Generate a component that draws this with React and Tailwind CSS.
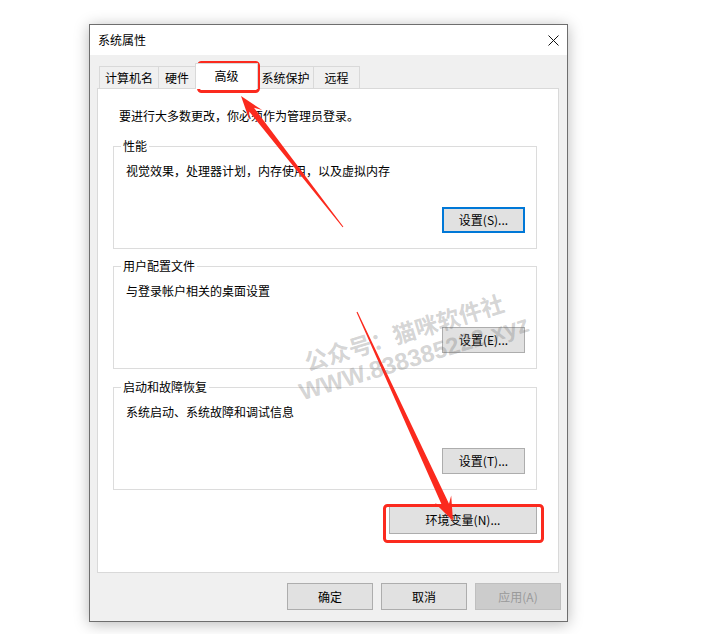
import React from 'react';

const arrowPoints = (x1, y1, x2, y2, tail, shaft, head, headLen) => {
  const dx = x2 - x1;
  const dy = y2 - y1;
  const len = Math.hypot(dx, dy);
  const ux = dx / len;
  const uy = dy / len;
  const nx = -uy;
  const ny = ux;
  const at = (d, w) => [x2 - ux * d + nx * w, y2 - uy * d + ny * w];
  const pts = [
    [x1 + (nx * tail) / 2, y1 + (ny * tail) / 2],
    at(headLen * 0.72, shaft / 2),
    at(headLen, head / 2),
    [x2, y2],
    at(headLen, -head / 2),
    at(headLen * 0.72, -shaft / 2),
    [x1 - (nx * tail) / 2, y1 - (ny * tail) / 2],
  ];
  return pts.map((p) => p.map((v) => v.toFixed(1)).join(',')).join(' ');
};

const tabs = [
  { label: '计算机名', w: 'w-[60px]' },
  { label: '硬件', w: 'w-[38px]' },
  { label: '高级', w: 'w-[63px]', active: true },
  { label: '系统保护', w: 'w-[57px]' },
  { label: '远程', w: 'w-[47px]' },
];

const WinButton = ({ children, focused = false, disabled = false, className = '' }) => (
  <button
    type="button"
    className={`flex items-center justify-center text-[12px] leading-none ${
      focused
        ? 'border-2 border-[#0078d7] bg-[#e1e1e1] text-black'
        : disabled
        ? 'border border-[#bfbfbf] bg-[#cccccc] text-[#9a9a9a]'
        : 'border border-[#adadad] bg-[#e1e1e1] text-black'
    } ${className}`}
  >
    {children}
  </button>
);

const GroupBox = ({ title, text, button, focused, className = '' }) => (
  <fieldset className={`w-[424px] border border-[#dcdcdc] ${className}`}>
    <legend className="ml-[7px] px-[2px] text-[12px] leading-[16px] text-black">{title}</legend>
    <div className="flex flex-col pl-[12px] pr-[11px] pb-[15px]">
      <div className="mt-[9px] text-[12px] leading-[16px] text-black">{text}</div>
      <div className="mt-[28px] flex justify-end">
        <WinButton focused={focused} className="w-[83px] h-[26px]">
          {button}
        </WinButton>
      </div>
    </div>
  </fieldset>
);

export default function App() {
  return (
    <div className="relative w-[702px] h-[634px] overflow-hidden bg-white pl-[89px] pt-[24px] font-['Noto_Sans_CJK_SC',sans-serif]">
      {/* dialog window */}
      <div className="flex w-[479px] h-[598px] flex-col border border-[#6e6e6e] bg-[#f0f0f0] shadow-[0_2px_14px_rgba(0,0,0,0.28)]">
        <div className="flex h-[30px] items-center justify-between bg-white pl-[8px] pr-[8px]">
          <span className="text-[12px] text-black">系统属性</span>
          <svg width="11" height="11" viewBox="0 0 11 11">
            <path d="M0.5 0.5 L10.5 10.5 M10.5 0.5 L0.5 10.5" stroke="#111" strokeWidth="1" />
          </svg>
        </div>

        {/* tabs */}
        <div className="mt-[8px] ml-[9px] flex h-[25px] items-end">
          {tabs.map((t, i) => (
            <div
              key={t.label}
              className={`${t.w} ${i > 0 ? '-ml-px' : ''} flex items-center justify-center border border-b-0 border-[#d9d9d9] text-[12px] text-black ${
                t.active ? 'relative z-10 -mb-px h-[26px] bg-white pb-[2px]' : 'h-[22px] bg-[#f0f0f0]'
              }`}
            >
              {t.label}
            </div>
          ))}
        </div>

        {/* panel */}
        <div className="ml-[7px] flex w-[462px] h-[485px] flex-col border border-[#d9d9d9] bg-white px-[15px]">
          <div className="mt-[19px] ml-[6px] text-[12px] leading-[16px] text-black">
            要进行大多数更改，你必须作为管理员登录。
          </div>
          <GroupBox
            className="mt-[14px]"
            title="性能"
            text="视觉效果，处理器计划，内存使用，以及虚拟内存"
            button="设置(S)..."
            focused
          />
          <GroupBox
            className="mt-[9px]"
            title="用户配置文件"
            text="与登录帐户相关的桌面设置"
            button="设置(E)..."
          />
          <GroupBox
            className="mt-[10px]"
            title="启动和故障恢复"
            text="系统启动、系统故障和调试信息"
            button="设置(T)..."
          />
          <div className="mt-[16px] flex w-[424px] justify-end">
            <WinButton className="w-[148px] h-[28px]">环境变量(N)...</WinButton>
          </div>
        </div>

        {/* bottom buttons */}
        <div className="mt-[10px] flex justify-end gap-[8px] pr-[6px]">
          <WinButton className="w-[86px] h-[27px]">确定</WinButton>
          <WinButton className="w-[86px] h-[27px]">取消</WinButton>
          <WinButton disabled className="w-[86px] h-[27px]">应用(A)</WinButton>
        </div>
      </div>

      {/* annotations */}
      <svg className="pointer-events-none absolute left-0 top-0" width="702" height="634" viewBox="0 0 702 634">
        <rect x="198.5" y="62.5" width="60" height="29" rx="3" fill="none" stroke="#fb2a1e" strokeWidth="3" />
        <rect x="384.5" y="505.5" width="158" height="36" rx="3" fill="none" stroke="#fb2a1e" strokeWidth="3" />
        <polygon points={arrowPoints(343, 227, 241, 96, 1, 6, 16, 24)} fill="#fb2a1e" />
        <polygon points={arrowPoints(357, 312, 453, 521, 1, 7, 18, 24)} fill="#fb2a1e" />
      </svg>

      {/* watermark */}
      <div className="pointer-events-none absolute left-[404px] top-[332px] -translate-x-1/2 -translate-y-1/2 rotate-[-17deg] whitespace-nowrap text-[23px] font-bold leading-none text-[rgba(110,110,110,0.3)]">
        公众号：猫咪软件社
      </div>
      <div className="pointer-events-none absolute left-[414px] top-[358px] -translate-x-1/2 -translate-y-1/2 rotate-[-17deg] whitespace-nowrap font-['Liberation_Sans',sans-serif] text-[24px] font-bold leading-none text-[rgba(110,110,110,0.3)]">
        WWW.838385222.xyz
      </div>
    </div>
  );
}
